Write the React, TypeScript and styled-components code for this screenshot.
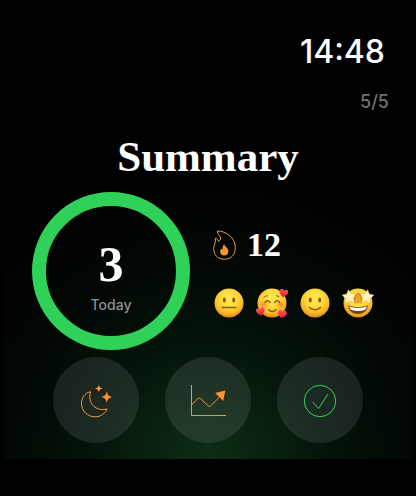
import React from 'react';
import styled, { createGlobalStyle } from 'styled-components';

const GlobalStyle = createGlobalStyle`
  * { box-sizing: border-box; }
  body { margin: 0; background: #000; }
`;

const sans = `Inter, 'Liberation Sans', sans-serif`;
const serif = `'Liberation Serif', serif`;
const orange = '#ff9330';
const green = '#30d158';

const Page = styled.div`
  min-height: 100vh;
  display: flex;
  flex-direction: column;
  padding: 0 4px 37px;
  background: #000;
  color: #fff;
  font-family: ${sans};
`;

const Screen = styled.main`
  flex: 1;
  display: flex;
  flex-direction: column;
  padding-bottom: 16px;
  background: radial-gradient(
    circle at 50% 100%,
    #0c2e16 0,
    #081f0e 70px,
    #04140a 120px,
    #020a05 180px,
    #010402 240px,
    #000 310px
  );
`;

const StatusBar = styled.header`
  display: flex;
  justify-content: flex-end;
  padding: 32px 27px 0 0;
`;

const Clock = styled.time`
  font-size: 32px;
  line-height: 40px;
  font-weight: 500;
`;

const PageCount = styled.div`
  padding: 18px 23px 0 0;
  text-align: right;
  font-size: 18px;
  line-height: 24px;
  font-weight: 500;
  color: #727276;
`;

const Title = styled.h1`
  margin: 20px 0 12px;
  text-align: center;
  font-family: ${serif};
  font-size: 43px;
  line-height: 46px;
  font-weight: 700;
`;

const Overview = styled.section`
  display: flex;
  align-items: center;
  gap: 23px;
  padding-left: 28px;
`;

const Ring = styled.div`
  flex: none;
  display: flex;
  flex-direction: column;
  align-items: center;
  width: 158px;
  height: 158px;
  padding-top: 32px;
  border: 14px solid ${green};
  border-radius: 50%;
`;

const Count = styled.strong`
  font-family: ${serif};
  font-size: 50px;
  line-height: 52px;
`;

const Caption = styled.span`
  font-size: 14px;
  line-height: 30px;
  font-weight: 500;
  color: #8e8e93;
`;

const Details = styled.div`
  display: flex;
  flex-direction: column;
  gap: 22px;
  padding-top: 2px;
`;

const Streak = styled.div`
  display: flex;
  align-items: center;
  gap: 10px;
`;

const StreakValue = styled.strong`
  font-family: ${serif};
  font-size: 34px;
  line-height: 40px;
`;

const Moods = styled.ul`
  display: flex;
  gap: 11px;
  margin: 0;
  padding: 0;
  list-style: none;
`;

const Mood = styled.li`
  width: 32px;
  height: 32px;
`;

const Actions = styled.nav`
  display: flex;
  justify-content: center;
  gap: 26px;
  margin-top: auto;
`;

const ActionButton = styled.button<{ $color: string }>`
  display: flex;
  align-items: center;
  justify-content: center;
  width: 86px;
  height: 86px;
  padding: 2px 0 0;
  border: 0;
  border-radius: 50%;
  background: rgba(242, 240, 251, 0.1);
  color: ${(p) => p.$color};
  cursor: pointer;
`;

const Icon = styled.svg`
  display: block;
  flex: none;
  overflow: visible;
`;

const FlameIcon = () => (
  <Icon width="24" height="30" viewBox="0 0 24 30" fill="none" aria-hidden="true">
    <path
      d="M4.3 1C13 1 22.3 7.5 22.3 17.5C22.3 25 18 29.2 11.3 29.2C4.5 29.2.7 25 .7 18.5C.7 14.5 3.3 13 2.3 8.2C4 8.7 5 9.8 5.3 11.2C6.6 10.8 7.8 9.5 7.5 8C7 5 4.3 4.5 4.3 1Z"
      stroke={orange}
      strokeLinejoin="round"
    />
    <path
      d="M11.3 14.3C11.6 16.8 15.6 18 15.4 21.4C15.3 24.2 13.6 25.4 11.3 25.4C8.8 25.4 7.2 23.9 7.2 21.4C7.2 20.1 7.7 19.2 8.4 18.6C8.6 19.3 9 19.8 9.6 20C9.4 17.6 9.7 15.5 11.3 14.3Z"
      fill={orange}
    />
  </Icon>
);

const MoonIcon = () => (
  <Icon width="34" height="34" viewBox="-2 0 34 34" fill="none" aria-hidden="true">
    <path
      d="M9.6 7.8C3.4 8.8.5 14.2.5 19.3C.5 27 6.5 32.8 14 32.8C19.6 32.8 24.2 29.8 26 24.9C15.8 28 5.8 19.8 9.6 7.8Z"
      stroke="currentColor"
      strokeLinejoin="round"
    />
    <path
      d="M17.8 .6C18.3 3.3 19 4 21.8 4.4C19 4.9 18.3 5.6 17.8 8.4C17.3 5.6 16.6 4.9 13.8 4.4C16.6 4 17.3 3.3 17.8 .6ZM25.8 6.7C26.5 11 27.6 12.1 31.7 12.9C27.6 13.7 26.5 14.8 25.8 19.1C25.1 14.8 24 13.7 19.9 12.9C24 12.1 25.1 11 25.8 6.7Z"
      fill="currentColor"
    />
  </Icon>
);

const ChartIcon = () => (
  <Icon width="36" height="32" viewBox="0 0 36 32" fill="none" aria-hidden="true">
    <path d="M1.5 0V30.5H36M1.5 20L8 13.6C9 12.6 9.7 12.6 10.7 13.6L18 20.7C19 21.7 19.8 21.7 20.8 20.7L29 12.5" stroke="currentColor" />
    <path d="M35.3 5.5L33.2 16L25.2 8Z" fill="currentColor" />
  </Icon>
);

const CheckIcon = () => (
  <Icon width="34" height="34" viewBox="0 0 34 34" fill="none" aria-hidden="true">
    <circle cx="17" cy="17" r="15.7" stroke="currentColor" />
    <path d="M9.8 18.2L15.5 24.5L24.8 10.3" stroke="currentColor" strokeLinecap="round" strokeLinejoin="round" />
  </Icon>
);

const FaceDefs = () => (
  <defs>
    <radialGradient id="face" cx="50%" cy="36%" r="66%">
      <stop offset="0" stopColor="#ffec50" />
      <stop offset="0.45" stopColor="#ffda3c" />
      <stop offset="0.75" stopColor="#fab928" />
      <stop offset="1" stopColor="#e07f10" />
    </radialGradient>
    <radialGradient id="blush" cx="50%" cy="50%" r="50%">
      <stop offset="0" stopColor="#ff6a35" stopOpacity="0.75" />
      <stop offset="1" stopColor="#ff7a35" stopOpacity="0" />
    </radialGradient>
    <linearGradient id="star" x1="0" y1="0" x2="0" y2="1">
      <stop offset="0" stopColor="#fffbe9" />
      <stop offset="1" stopColor="#ffe7a4" />
    </linearGradient>
    <linearGradient id="heart" x1="0" y1="0" x2="0" y2="1">
      <stop offset="0" stopColor="#ff5361" />
      <stop offset="1" stopColor="#dc1d36" />
    </linearGradient>
  </defs>
);

const Face = ({ label, children }: { label: string; children: React.ReactNode }) => (
  <Icon width="32" height="32" viewBox="0 0 32 32" role="img" aria-label={label}>
    <FaceDefs />
    <circle cx="16" cy="16" r="14.5" fill="url(#face)" />
    {children}
  </Icon>
);

const Eyes = () => (
  <g fill="#8a5716">
    <ellipse cx="11.3" cy="13" rx="1.5" ry="2.6" />
    <ellipse cx="20.7" cy="13" rx="1.5" ry="2.6" />
  </g>
);

const Heart = ({ x, y, turn }: { x: number; y: number; turn: number }) => (
  <path
    transform={`translate(${x} ${y}) rotate(${turn})`}
    d="M0 4.4C-2.5 2.5-4.3 .8-4.3-1.3C-4.3-3.9-1.1-4.5 0-2.1C1.1-4.5 4.3-3.9 4.3-1.3C4.3 .8 2.5 2.5 0 4.4Z"
    fill="url(#heart)"
  />
);

const NeutralFace = () => (
  <Face label="Neutral">
    <Eyes />
    <path d="M9.2 20.4H22.8" stroke="#8a5716" strokeWidth="1.5" strokeLinecap="round" />
  </Face>
);

const LovedFace = () => (
  <Face label="Loved">
    <ellipse cx="8" cy="17.5" rx="5.5" ry="4.5" fill="url(#blush)" />
    <ellipse cx="24.5" cy="17.5" rx="5.5" ry="4.5" fill="url(#blush)" />
    <g stroke="#8a5716" fill="none" strokeLinecap="round">
      <path d="M9 15.6C10 13.2 13 13.2 14 15.6M18.6 15.6C19.6 13.2 22.6 13.2 23.6 15.6M12.6 22.6C14.4 25.2 18.2 25.2 20 22.6" strokeWidth="1.4" />
      <path d="M7.5 10.8C8.7 9.5 10 8.8 11.6 8.8M20.5 8.8C21.5 8.8 22.4 9.2 23 9.7" strokeWidth="1" />
    </g>
    <Heart x={27.6} y={6} turn={12} />
    <Heart x={4.6} y={24.4} turn={-14} />
    <Heart x={26.2} y={27} turn={10} />
  </Face>
);

const SmilingFace = () => (
  <Face label="Smiling">
    <Eyes />
    <path d="M10.5 20.5C13.4 23.4 18.6 23.4 21.5 20.5" stroke="#8a5716" strokeWidth="1.4" strokeLinecap="round" fill="none" />
  </Face>
);

const StarStruckFace = () => (
  <Face label="Star-struck">
    <path d="M6.2 18.2C12 20.6 20 20.6 25.8 18.2C25.8 23 22 27 16 27C10 27 6.2 23 6.2 18.2Z" fill="#75400f" />
    <path d="M7.2 19.2C12.6 21.3 19.4 21.3 24.8 19.2C24.4 21.4 23.5 22.4 22.5 23C18.2 24.3 13.8 24.3 9.5 23C8.5 22.2 7.6 21.2 7.2 19.2Z" fill="#fff" />
    <path d="M12.6 16.3C11.8 10.5 14.2 6.3 16 6.3C17.8 6.3 20.2 10.5 19.4 16.3" fill="#efa41b" stroke="#a76516" strokeWidth="0.9" />
    <path
      d="M6.3 2.7L9 6.7L13.9 6.8L11.3 11L12.9 15.9L8 14.3L3.2 17L3.5 11.7L.2 8L4.8 6.9Z"
      fill="url(#star)"
      stroke="#ecab31"
      strokeWidth="0.5"
    />
    <path
      d="M25.7 2.7L23 6.7L18.1 6.8L20.7 11L19.1 15.9L24 14.3L28.8 17L28.5 11.7L31.8 8L27.2 6.9Z"
      fill="url(#star)"
      stroke="#ecab31"
      strokeWidth="0.5"
    />
  </Face>
);

const moods = [NeutralFace, LovedFace, SmilingFace, StarStruckFace];

const actions = [
  { label: 'Sleep', color: orange, Glyph: MoonIcon },
  { label: 'Trends', color: orange, Glyph: ChartIcon },
  { label: 'Done', color: green, Glyph: CheckIcon },
];

export default function App() {
  return (
    <Page>
      <GlobalStyle />
      <Screen>
        <StatusBar>
          <Clock>14:48</Clock>
        </StatusBar>
        <PageCount>5/5</PageCount>
        <Title>Summary</Title>
        <Overview>
          <Ring>
            <Count>3</Count>
            <Caption>Today</Caption>
          </Ring>
          <Details>
            <Streak>
              <FlameIcon />
              <StreakValue>12</StreakValue>
            </Streak>
            <Moods>
              {moods.map((MoodFace, index) => (
                <Mood key={index}>
                  <MoodFace />
                </Mood>
              ))}
            </Moods>
          </Details>
        </Overview>
        <Actions>
          {actions.map(({ label, color, Glyph }) => (
            <ActionButton key={label} type="button" aria-label={label} $color={color}>
              <Glyph />
            </ActionButton>
          ))}
        </Actions>
      </Screen>
    </Page>
  );
}
